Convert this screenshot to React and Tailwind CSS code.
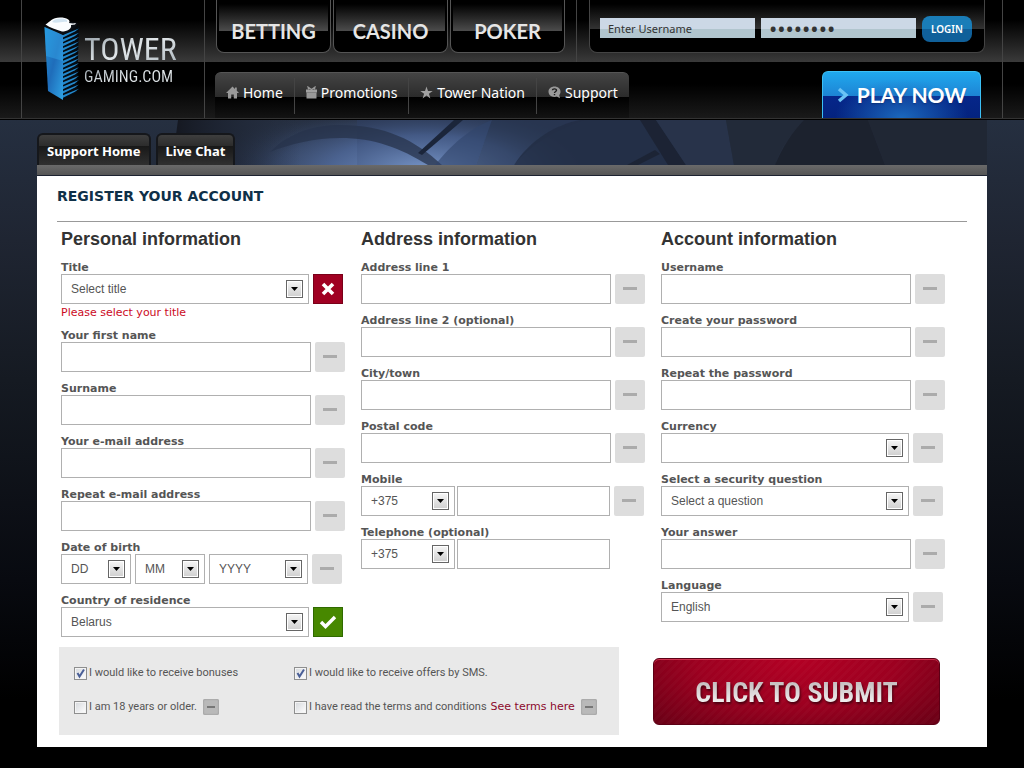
import React from 'react';

const TOP_TABS = ['BETTING', 'CASINO', 'POKER'];

const NAV = [
    { label: 'Home', icon: HomeGlyph },
    { label: 'Promotions', icon: GiftGlyph },
    { label: 'Tower Nation', icon: StarGlyph },
    { label: 'Support', icon: HelpGlyph },
];

function HomeGlyph() {
    return (
        <svg width="13" height="13" viewBox="0 0 13 13" fill="#999" aria-hidden="true">
            <path d="M6.5 0.5 L0 7 H2 V12.5 H5.2 V8.5 H7.8 V12.5 H11 V7 H13 L10.8 4.8 V1.5 H9 V3 Z" />
        </svg>
    );
}

function GiftGlyph() {
    return (
        <svg width="11" height="13" viewBox="0 0 11 13" aria-hidden="true">
            <path d="M5.5 3.5 L2 1 L2.5 3.5 M5.5 3.5 L9 1 L8.5 3.5" fill="none" stroke="#999" strokeWidth="1.2" />
            <rect x="0" y="3.5" width="11" height="3" fill="#a0a0a0" />
            <rect x="0.5" y="6.5" width="10" height="6" fill="#999" />
        </svg>
    );
}

function StarGlyph() {
    return (
        <svg width="13" height="13" viewBox="0 0 13 13" fill="#a0a0a0" aria-hidden="true">
            <path d="M6.5 0.5 L8 5 H12.7 L8.9 7.8 L10.4 12.4 L6.5 9.6 L2.6 12.4 L4.1 7.8 L0.3 5 H5 Z" />
        </svg>
    );
}

function HelpGlyph() {
    return (
        <svg width="13" height="13" viewBox="0 0 13 13" aria-hidden="true">
            <path d="M6.5 0.5 C10 0.5 12.5 2.7 12.5 5.7 C12.5 7 12 8.2 11.2 9 L12 12.3 L8.8 10.6 C8 10.8 7.3 10.9 6.5 10.9 C3 10.9 0.5 8.7 0.5 5.7 C0.5 2.7 3 0.5 6.5 0.5 Z" fill="#999" />
            <path d="M4.4 4.3 C4.5 2.4 8.6 2.4 8.5 4.4 C8.4 5.6 6.6 5.5 6.5 7 M6.5 8 V9.2" fill="none" stroke="#1c1c1c" strokeWidth="1.4" />
        </svg>
    );
}

function TowerMark() {
    const slats = Array.from({ length: 15 }, (_, i) => 18 + i * 4.3);
    return (
        <svg width="36" height="84" viewBox="0 0 36 84" aria-hidden="true">
            <defs>
                <linearGradient id="tower" x1="0" y1="0" x2="1" y2="1">
                    <stop offset="0" stopColor="#1d8fd6" />
                    <stop offset="0.5" stopColor="#1f6dba" />
                    <stop offset="1" stopColor="#2fa4e6" />
                </linearGradient>
            </defs>
            <path d="M19 16 L35 9 L33 75 L19 83 Z" fill="#050b12" />
            <path d="M0.5 10 L19 18 V83 L4 74 Z" fill="url(#tower)" />
            <path d="M0.5 10 L19 18 V44 L2 39 Z" fill="#35a8ec" opacity="0.45" />
            {slats.map((y) => (
                <path key={y} d={`M19 ${y} L35 ${y - 6.5} L31 ${y - 3.4} L19 ${y + 2.6} Z`} fill="#2388cc" />
            ))}
            <path d="M0.5 8 L16 3 L34 6 L31 11 L19 18 Z" fill="#0a0e14" />
            <path d="M1.5 7.5 C6 5 8 0.5 16 0.5 C23 0.5 27 3 25 6 L29 6.6 L32 6 L31 7.4 L27 8 C28 12 23 14.5 18 14.5 C12 12.5 6 11 1.5 7.5 Z" fill="#fbfdff" />
            <path d="M8 5 C10 2 13 1.5 17 1.5 C21 1.5 24 3 23 5 C18 4 13 7 8 5 Z" fill="#d3e5f2" />
        </svg>
    );
}

function Banner() {
    return (
        <svg className="absolute inset-0 h-full w-full" viewBox="0 0 1024 45" preserveAspectRatio="none" aria-hidden="true">
            <defs>
                <radialGradient id="glow" cx="0.5" cy="0.5" r="0.5">
                    <stop offset="0" stopColor="#7896c8" />
                    <stop offset="0.5" stopColor="#4a6291" stopOpacity="0.8" />
                    <stop offset="1" stopColor="#232c3d" stopOpacity="0" />
                </radialGradient>
                <linearGradient id="edge" x1="0" x2="1" y1="0" y2="0">
                    <stop offset="0" stopColor="#14171f" />
                    <stop offset="1" stopColor="#222c40" stopOpacity="0" />
                </linearGradient>
            </defs>
            <path d="M178 0 H987 V45 H172 Z" fill="#252e3f" />
            <ellipse cx="350" cy="50" rx="150" ry="62" fill="url(#glow)" opacity="0.7" />
            <rect x="357" width="330" height="45" fill="#2a3856" />
            <ellipse cx="425" cy="50" rx="190" ry="70" fill="url(#glow)" />
            <path d="M178 0 H300 V45 H172 Z" fill="url(#edge)" />
            <path d="M270 32 C290 12 315 5 340 5 C385 5 415 20 442 45 H428 C400 28 375 18 340 18 C315 18 290 24 270 32 Z" fill="#27334b" opacity="0.75" />
            <path d="M463 0 H454 L418 33 L422 35 Z" fill="#1b253a" />
            <path d="M435 45 C455 20 475 6 492 0 L476 45 Z" fill="#31456b" opacity="0.6" />
            <path d="M492 0 H585 C555 10 530 25 514 45 H476 Z" fill="#26334c" opacity="0.45" />
            <path d="M514 45 C530 20 555 5 580 0 H687 V45 Z" fill="#222d43" opacity="0.8" />
            <path d="M627 45 L655 30 L660 34 L638 45 Z" fill="#19202e" opacity="0.7" />
            <path d="M640 0 H656 L686 45 H668 Z" fill="#1a2130" opacity="0.8" />
            <path d="M656 0 H726 L734 45 H686 Z" fill="#28334a" />
            <path d="M726 0 H804 C790 14 780 30 775 45 H734 Z" fill="#222a38" opacity="0.9" />
            <path d="M804 0 H868 L885 45 H775 C782 28 792 12 804 0 Z" fill="#1b202b" opacity="0.85" />
            <path d="M868 0 H987 V45 H885 Z" fill="#1f2632" opacity="0.8" />
        </svg>
    );
}

function StatusButton({ status = 'idle', label }) {
    if (status === 'error') {
        return (
            <button type="button" aria-label={label} className="flex size-[30px] shrink-0 items-center justify-center border border-[#7a0019] bg-[#a00022]">
                <svg width="14" height="14" viewBox="0 0 14 14" aria-hidden="true">
                    <path d="M2 2 L12 12 M12 2 L2 12" stroke="#fff" strokeWidth="3.6" />
                </svg>
            </button>
        );
    }
    if (status === 'ok') {
        return (
            <button type="button" aria-label={label} className="flex size-[30px] shrink-0 items-center justify-center border border-[#2f6a00] bg-[#478800]">
                <svg width="18" height="14" viewBox="0 0 18 14" aria-hidden="true">
                    <path d="M2 7 L6.5 11.5 L16 2" fill="none" stroke="#fff" strokeWidth="3.4" />
                </svg>
            </button>
        );
    }
    return (
        <button type="button" aria-label={label} className="flex size-[30px] shrink-0 items-center justify-center rounded-xs bg-[#ddd] pb-0.5">
            <span className="h-[3px] w-3.5 bg-[#ababab]" />
        </button>
    );
}

function SmallStatus({ label }) {
    return (
        <button type="button" aria-label={label} className="flex size-4 shrink-0 items-center justify-center rounded-xs bg-[#b9b9b9] shadow-[inset_0_0_2px_#888]">
            <span className="h-0.5 w-2 bg-[#777]" />
        </button>
    );
}

function TextBox({ id, label, type = 'text' }) {
    return <input id={id} type={type} aria-label={label} className="h-[30px] w-full min-w-0 flex-1 border border-[#b0b0b0] bg-white px-2 text-xs text-[#555] outline-none" />;
}

function SelectBox({ id, label, value, className = 'flex-1' }) {
    return (
        <div className={`relative min-w-0 ${className}`}>
            <select id={id} aria-label={label} className="block h-[30px] w-full appearance-none border border-[#b0b0b0] bg-white pr-7 pl-[9px] text-xs text-[#555]">
                <option>{value}</option>
            </select>
            <span className="pointer-events-none absolute top-1.5 right-1.5 flex h-[18px] w-[17px] items-center justify-center border border-[#666] bg-linear-to-b from-[#f6f6f6] to-[#cfcfcf] shadow-[inset_0_0_0_1px_#fff]">
                <svg width="7" height="4" viewBox="0 0 7 4" aria-hidden="true">
                    <path d="M0 0 H7 L3.5 4 Z" fill="#000" />
                </svg>
            </span>
        </div>
    );
}

function FieldLabel({ id, children }) {
    return <label htmlFor={id} className="block pt-0.5 font-[DejaVu_Sans,sans-serif] text-[11px] leading-3 font-bold text-[#555]">{children}</label>;
}

function Field({ id, label, kind = 'text', value, status, error }) {
    return (
        <div className="mb-[9px]">
            <FieldLabel id={id}>{label}</FieldLabel>
            <div className={kind === 'select' ? 'mr-0.5 flex gap-1' : 'flex gap-1'}>
                {kind === 'select' ? <SelectBox id={id} value={value} /> : <TextBox id={id} type={kind} />}
                <StatusButton status={status} label={`${label} status`} />
            </div>
            {error && <p className="pt-0.5 font-[DejaVu_Sans,sans-serif] text-[11px] leading-[13px] text-[#cc0a1e]">{error}</p>}
        </div>
    );
}

function BirthField() {
    return (
        <div className="mb-[9px]">
            <FieldLabel id="dob-day">Date of birth</FieldLabel>
            <div className="mr-[3px] flex gap-1">
                <SelectBox id="dob-day" value="DD" className="w-[70px]" />
                <SelectBox id="dob-month" label="Month" value="MM" className="w-[70px]" />
                <SelectBox id="dob-year" label="Year" value="YYYY" />
                <StatusButton label="Date of birth status" />
            </div>
        </div>
    );
}

function PhoneField({ id, label, optional }) {
    return (
        <div className="mb-[9px]">
            <FieldLabel id={id}>{label}</FieldLabel>
            <div className={optional ? 'mr-[35px] flex gap-0.5' : 'mr-px flex gap-0.5'}>
                <SelectBox id={`${id}-code`} label={`${label} code`} value="+375" className="w-[94px]" />
                <TextBox id={id} />
                {!optional && (
                    <div className="ml-0.5">
                        <StatusButton label={`${label} status`} />
                    </div>
                )}
            </div>
        </div>
    );
}

function Column({ title, children }) {
    return (
        <section className="pr-4">
            <h2 className="mb-1 text-lg leading-[34px] font-bold text-[#333]">{title}</h2>
            {children}
        </section>
    );
}

function Check({ id, label, checked, children }) {
    return (
        <div className="flex h-4 items-center">
            <span className="relative flex size-[13px]">
                <input id={id} type="checkbox" defaultChecked={checked} className="peer size-[13px] appearance-none border border-[#8e8f8f] bg-linear-to-br from-[#d5d8dc] to-white shadow-[inset_0_0_0_1px_#f4f4f4]" />
                <svg className="pointer-events-none absolute inset-0 hidden peer-checked:block" width="13" height="13" viewBox="0 0 13 13" aria-hidden="true">
                    <path d="M3.5 6 L5.5 9.5 L10 2.5" fill="none" stroke="#4a5f97" strokeWidth="2" />
                </svg>
            </span>
            <label htmlFor={id} className="ml-0.5 font-[Roboto,sans-serif] text-[11px] whitespace-nowrap text-[#555]">{label}</label>
            {children}
        </div>
    );
}

function Header() {
    return (
        <header className="border-b border-black bg-black">
            <div className="border-b border-[#333] bg-[linear-gradient(to_bottom,#000_20px,#3a3a3a_62px,#000_62px,#000_84px,#1a1a1a_118px)]">
                <div className="mx-auto flex h-[118px] max-w-[982px] border-x border-[#444]">
                    <a href="#" className="flex w-[183px] shrink-0 items-center border-r border-[#444] pl-[22px]">
                        <TowerMark />
                        <span className="ml-1 flex flex-col font-[Roboto_Condensed,DejaVu_Sans_Condensed,sans-serif]">
                            <span className="bg-linear-to-br from-[#8e99a1] via-[#e2e7ea] to-[#a9b3ba] bg-clip-text text-[32px] leading-9 text-transparent">TOWER</span>
                            <span className="bg-linear-to-br from-[#8e99a1] via-[#e2e7ea] to-[#cdd3d7] bg-clip-text text-base leading-5 text-transparent">GAMING.COM</span>
                        </span>
                    </a>
                    <div className="flex flex-1 flex-col">
                        <div className="flex h-[62px]">
                            <div className="flex gap-0.5 border-r border-[#444] pr-[11px] pl-[11px]">
                                {TOP_TABS.map((tab) => (
                                    <a key={tab} href="#" className="flex h-[53px] w-[115px] items-center justify-center rounded-b-lg border border-t-0 border-[#555] bg-[linear-gradient(to_bottom,#000_4px,#4c4c4c_31px,#000_31px)] pt-2.5 font-[Lato,sans-serif] text-xl font-bold text-[#e6e6e6] shadow-[inset_2px_0_0_#000,inset_-2px_0_0_#000]">
                                        {tab}
                                    </a>
                                ))}
                            </div>
                            <form className="mr-[17px] ml-3 flex h-[53px] flex-1 items-start gap-1.5 rounded-b-lg border border-t-0 border-[#444] bg-[linear-gradient(to_bottom,#000_4px,#333_29px,#000_29px)] pt-4 pr-3 pl-2.5 font-[Noto_Sans,sans-serif]">
                                <input aria-label="Username" defaultValue="Enter Username" className="mt-0.5 h-5 w-0 flex-1 bg-[linear-gradient(to_bottom,#ccd8e6_11px,#b1c5ce_11px)] px-2 text-[11px] text-[#333]" />
                                <input aria-label="Password" type="password" defaultValue="password" className="mt-0.5 h-5 w-0 flex-1 bg-[linear-gradient(to_bottom,#ccd8e6_11px,#b1c5ce_11px)] px-2 text-[22px] text-[#333]" />
                                <button type="button" className="h-[26px] w-[50px] rounded-lg bg-[linear-gradient(to_bottom,#1a7db8_13px,#10609a_13px)] text-[10px] font-semibold text-white">LOGIN</button>
                            </form>
                        </div>
                        <div className="flex flex-1 items-end justify-between pr-[21px] pl-2.5">
                            <nav className="flex h-[46px] items-center rounded-t-md border-t border-[#555] bg-[linear-gradient(to_bottom,#444_0,#2b2b2b_24px,#000_24px,#141414_46px)] font-[Noto_Sans,sans-serif] text-sm text-white">
                                {NAV.map(({ label, icon: Icon }, i) => (
                                    <a key={label} href="#" className={i === 0 ? 'flex h-9 items-center gap-1 px-[11px] pb-1.5' : 'flex h-9 items-center gap-1 border-l border-[#444] px-[11px] pb-1.5'}>
                                        <Icon />
                                        {label}
                                    </a>
                                ))}
                            </nav>
                            <a href="#" className="flex h-[47px] w-[159px] items-center justify-center gap-2 rounded-t-md border border-b-0 border-[#3cc0f5] bg-[radial-gradient(ellipse_at_bottom,#1b68bd_0,transparent_60%),linear-gradient(to_bottom,#20a9ee_0,#1d84d4_24px,#06268a_24px,#04237f_46px)] font-[Lato,sans-serif] text-[21px] font-bold text-white text-shadow-sm">
                                <svg width="12" height="16" viewBox="0 0 12 16" aria-hidden="true">
                                    <path d="M2 2 L9 8 L2 14" fill="none" stroke="#6cc4f5" strokeWidth="3.4" />
                                </svg>
                                PLAY NOW
                            </a>
                        </div>
                    </div>
                </div>
            </div>
        </header>
    );
}

export default function App() {
    return (
        <div className="min-h-screen bg-black bg-[linear-gradient(to_bottom,#252f40_120px,#1f2532_240px,#151a22_380px,#080a10_580px,#000_700px)] font-[Liberation_Sans,sans-serif]">
            <Header />
            <div className="relative h-[45px]">
                <Banner />
                <div className="relative mx-auto flex h-full max-w-[950px] items-end gap-[5px] font-[Noto_Sans,sans-serif] text-[13px] font-bold text-white">
                    <a href="#" className="flex h-8 items-center rounded-t-md border-2 border-b-0 border-[#15171b] bg-[linear-gradient(to_bottom,#3e3e3e,#2c2c2c_11px,#181818_11px,#303030)] px-2 pt-1">Support Home</a>
                    <a href="#" className="flex h-8 items-center rounded-t-md border-2 border-b-0 border-[#15171b] bg-[linear-gradient(to_bottom,#3e3e3e,#2c2c2c_11px,#181818_11px,#303030)] px-2 pt-1">Live Chat</a>
                </div>
            </div>
            <main className="mx-auto max-w-[950px] bg-white">
                <div className="h-[11px] border-b border-[#1c2230] bg-linear-to-b from-[#6a6a6a] to-[#555]" />
                <h1 className="mx-5 border-b border-[#999] pt-2.5 pb-[15px] font-[DejaVu_Sans,sans-serif] text-sm leading-5 font-bold text-[#0f3048]">REGISTER YOUR ACCOUNT</h1>
                <form>
                    <div className="grid grid-cols-3 pr-[26px] pl-6">
                        <Column title="Personal information">
                            <Field id="title" label="Title" kind="select" value="Select title" status="error" error="Please select your title" />
                            <Field id="first-name" label="Your first name" />
                            <Field id="surname" label="Surname" />
                            <Field id="email" label="Your e-mail address" kind="email" />
                            <Field id="email-repeat" label="Repeat e-mail address" kind="email" />
                            <BirthField />
                            <Field id="country" label="Country of residence" kind="select" value="Belarus" status="ok" />
                        </Column>
                        <Column title="Address information">
                            <Field id="address1" label="Address line 1" />
                            <Field id="address2" label="Address line 2 (optional)" />
                            <Field id="city" label="City/town" />
                            <Field id="postal" label="Postal code" />
                            <PhoneField id="mobile" label="Mobile" />
                            <PhoneField id="telephone" label="Telephone (optional)" optional />
                        </Column>
                        <Column title="Account information">
                            <Field id="username" label="Username" />
                            <Field id="password" label="Create your password" kind="password" />
                            <Field id="password-repeat" label="Repeat the password" kind="password" />
                            <Field id="currency" label="Currency" kind="select" value="" />
                            <Field id="question" label="Select a security question" kind="select" value="Select a question" />
                            <Field id="answer" label="Your answer" />
                            <Field id="language" label="Language" kind="select" value="English" />
                        </Column>
                    </div>
                    <div className="flex items-center justify-between pt-px pr-[47px] pb-3 pl-[22px]">
                        <div className="grid h-[88px] w-[560px] grid-cols-[220px_1fr] content-center gap-y-[18px] bg-[#e9e9e9] pb-0.5 pl-[15px]">
                            <Check id="bonuses" label="I would like to receive bonuses" checked />
                            <Check id="sms" label="I would like to receive offers by SMS." checked />
                            <Check id="adult" label="I am 18 years or older.">
                                <span className="ml-1.5 flex"><SmallStatus label="Age status" /></span>
                            </Check>
                            <Check id="terms" label="I have read the terms and conditions">
                                <a href="#" className="mr-1.5 ml-1 font-[DejaVu_Sans,sans-serif] text-[11px] whitespace-nowrap text-[#8c0a2c]">See terms here</a>
                                <SmallStatus label="Terms status" />
                            </Check>
                        </div>
                        <button type="submit" className="h-[67px] w-[287px] rounded-md border border-[#5c0015] bg-[repeating-linear-gradient(135deg,rgba(255,255,255,0.02)_0,rgba(255,255,255,0.02)_3px,transparent_3px,transparent_6px),radial-gradient(ellipse_at_top,#b30024_0,#9c0020_50%,#5e0013_110%)] pt-1 font-[Roboto_Condensed,DejaVu_Sans_Condensed,sans-serif] text-[28px] font-bold shadow-[inset_0_1px_0_#d0324f]">
                            <span className="bg-linear-to-b from-[#b9b0b2] to-white bg-clip-text text-transparent drop-shadow-[1px_2px_1px_#4a0010]">CLICK TO SUBMIT</span>
                        </button>
                    </div>
                </form>
            </main>
        </div>
    );
}
